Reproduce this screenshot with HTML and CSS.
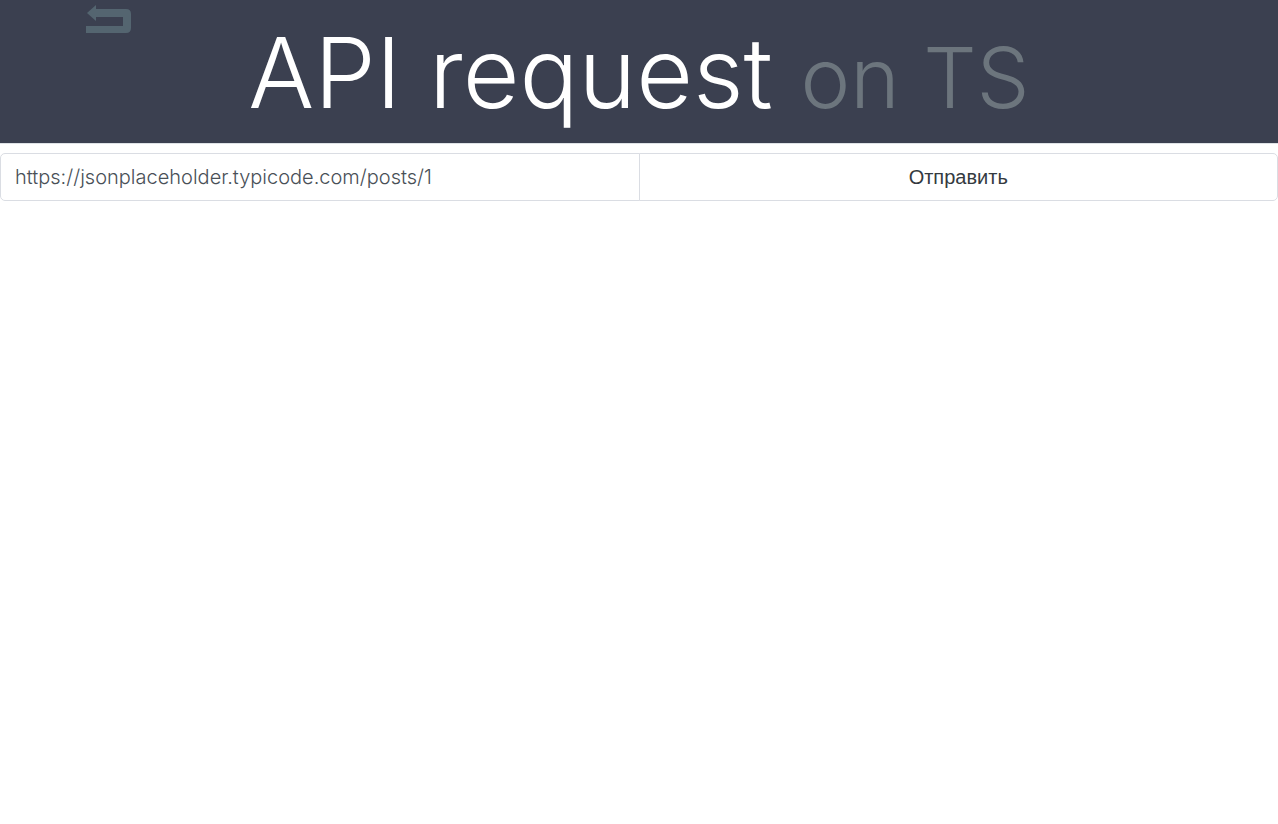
FILE: index.html
```html
<!DOCTYPE html>
<html lang="ru">
<head>
<meta charset="utf-8">
<meta name="viewport" content="width=device-width, initial-scale=1">
<title>API request on TS</title>
<link rel="stylesheet" href="styles.css">
</head>
<body>
<header class="header">
  <a class="back" href="#" aria-label="Назад">
    <svg class="back-icon" viewBox="0 0 46 30" aria-hidden="true"><path d="M1 8 L10 0 V4 H40 Q45 4 45 9 V23 Q45 28 40 28 H0 V21 H37 V12 H10 V16 Z"/></svg>
  </a>
  <h1 class="title">API request <small class="title-note">on TS</small></h1>
</header>
<main>
  <form class="request">
    <input class="url" type="text" aria-label="URL" value="https://jsonplaceholder.typicode.com/posts/1">
    <button class="send" type="button">Отправить</button>
  </form>
</main>
</body>
</html>
```

FILE: styles.css
```css
* {
  box-sizing: border-box;
}

body {
  margin: 0;
  background: #fff;
  color: #212529;
  font-family: Inter, "Open Sans", sans-serif;
}

.header {
  position: relative;
  padding: 13px 16px 10px;
  background: #3b4050;
  border-bottom: 1px solid #dee2e6;
}

.back {
  position: absolute;
  top: 5px;
  left: 86px;
}

.back-icon {
  display: block;
  width: 46px;
  height: 30px;
  fill: #546570;
}

.title {
  margin: 0;
  color: #fff;
  font-size: 98px;
  font-weight: 300;
  line-height: 120px;
  text-align: center;
}

.title-note {
  color: #6c757d;
  font-size: 84px;
  font-weight: 300;
  line-height: 1;
}

.request {
  display: flex;
  margin-top: 9px;
}

.url,
.send {
  flex: 1 1 0;
  min-width: 0;
  height: 48px;
  margin: 0;
  padding: 8px 14px;
  border: 1px solid #dadde3;
  background: #fff;
  font-size: 20px;
}

.url {
  margin-right: -1px;
  border-radius: 5px 0 0 5px;
  color: #495057;
  font-family: Inter, "Open Sans", sans-serif;
  font-weight: 300;
}

.send {
  border-radius: 0 5px 5px 0;
  color: #343a40;
  font-family: "Liberation Sans", Arial, sans-serif;
}
```
